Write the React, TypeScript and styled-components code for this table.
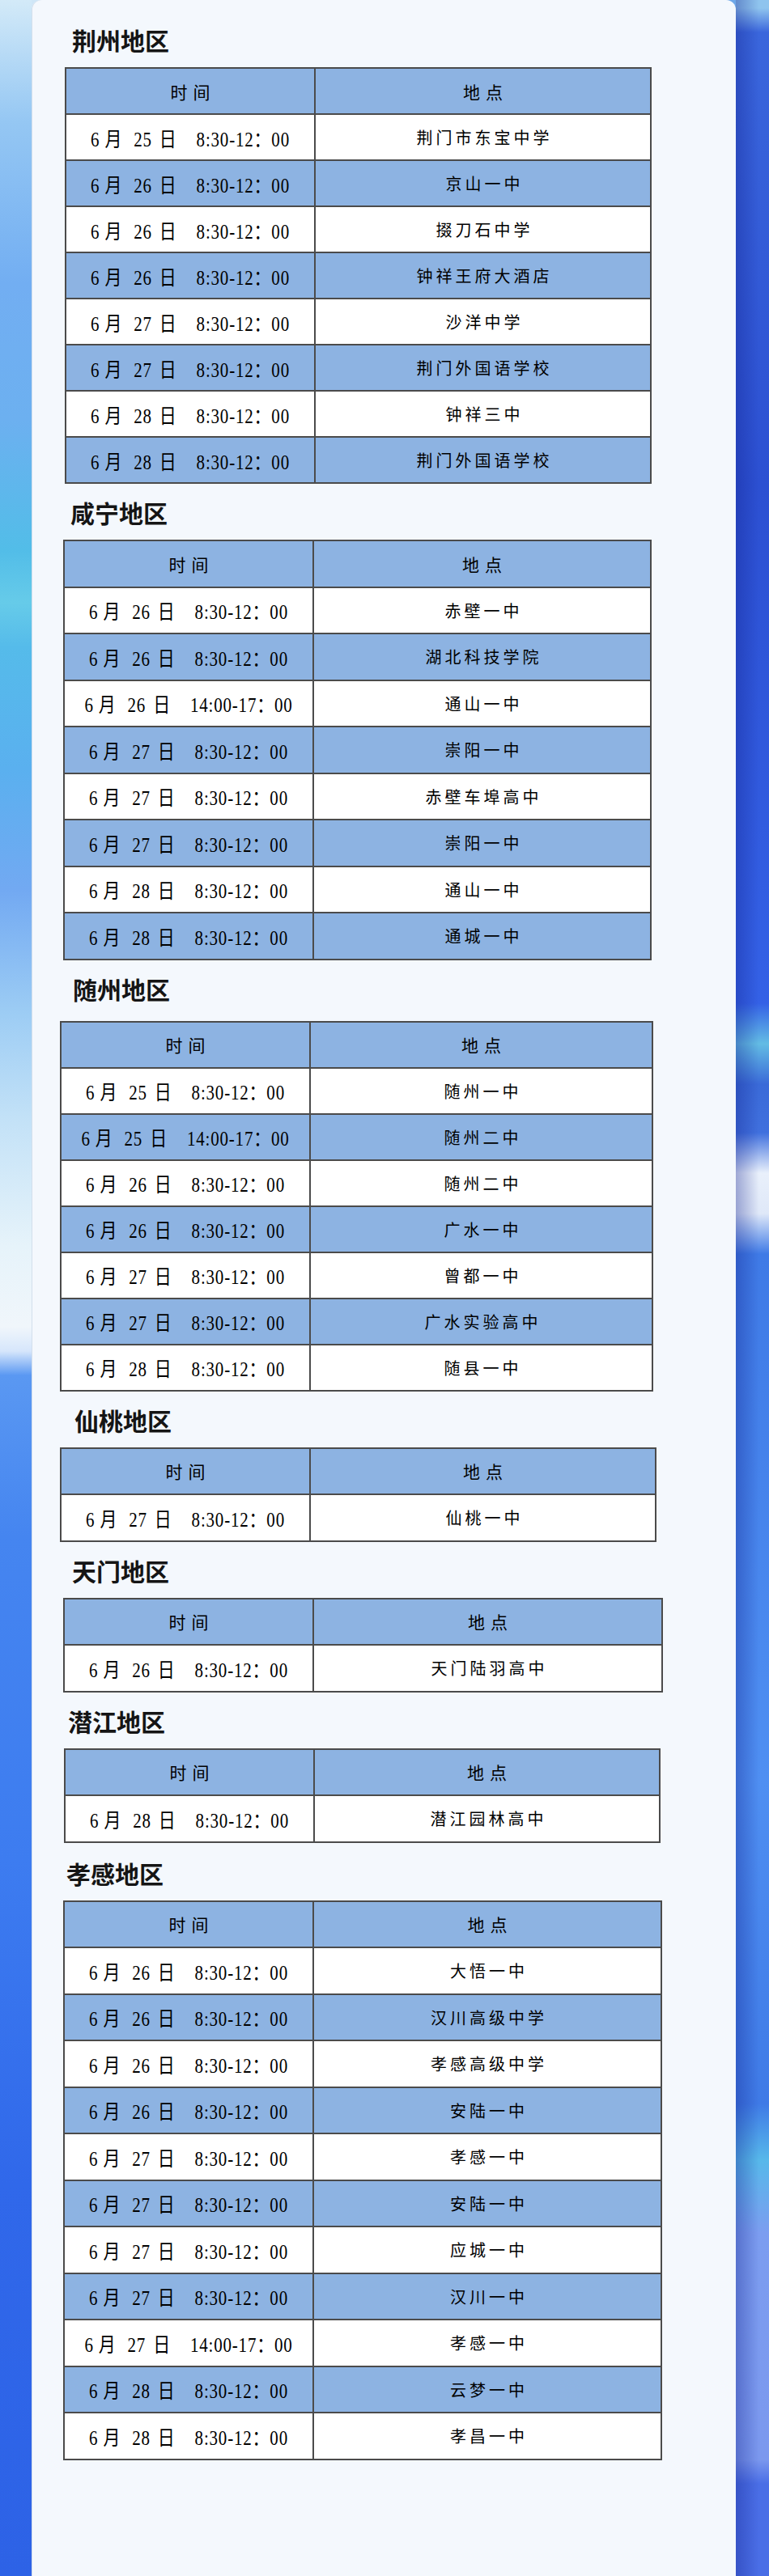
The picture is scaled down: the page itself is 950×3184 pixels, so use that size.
import React from "react";
import styled, { createGlobalStyle } from "styled-components";

type Entry = [string, string, string, string];

interface Region {
  name: string;
  titleX: number;
  titleTop: number;
  titleBottom: number;
  tableX: number;
  tableW: number;
  rowH: number;
  rows: Entry[];
}

const AM = "8:30-12：00";
const PM = "14:00-17：00";

const regions: Region[] = [
  {
    name: "荆州地区",
    titleX: 50,
    titleTop: 15,
    titleBottom: 14,
    tableX: 41,
    tableW: 725,
    rowH: 57,
    rows: [
      ["6", "25", AM, "荆门市东宝中学"],
      ["6", "26", AM, "京山一中"],
      ["6", "26", AM, "掇刀石中学"],
      ["6", "26", AM, "钟祥王府大酒店"],
      ["6", "27", AM, "沙洋中学"],
      ["6", "27", AM, "荆门外国语学校"],
      ["6", "28", AM, "钟祥三中"],
      ["6", "28", AM, "荆门外国语学校"],
    ],
  },
  {
    name: "咸宁地区",
    titleX: 48,
    titleTop: 15,
    titleBottom: 14,
    tableX: 39,
    tableW: 727,
    rowH: 57.5,
    rows: [
      ["6", "26", AM, "赤壁一中"],
      ["6", "26", AM, "湖北科技学院"],
      ["6", "26", PM, "通山一中"],
      ["6", "27", AM, "崇阳一中"],
      ["6", "27", AM, "赤壁车埠高中"],
      ["6", "27", AM, "崇阳一中"],
      ["6", "28", AM, "通山一中"],
      ["6", "28", AM, "通城一中"],
    ],
  },
  {
    name: "随州地区",
    titleX: 51,
    titleTop: 15,
    titleBottom: 20,
    tableX: 35,
    tableW: 733,
    rowH: 57,
    rows: [
      ["6", "25", AM, "随州一中"],
      ["6", "25", PM, "随州二中"],
      ["6", "26", AM, "随州二中"],
      ["6", "26", AM, "广水一中"],
      ["6", "27", AM, "曾都一中"],
      ["6", "27", AM, "广水实验高中"],
      ["6", "28", AM, "随县一中"],
    ],
  },
  {
    name: "仙桃地区",
    titleX: 53,
    titleTop: 15,
    titleBottom: 14,
    tableX: 35,
    tableW: 737,
    rowH: 57.5,
    rows: [["6", "27", AM, "仙桃一中"]],
  },
  {
    name: "天门地区",
    titleX: 50,
    titleTop: 15,
    titleBottom: 14,
    tableX: 39,
    tableW: 741,
    rowH: 57.5,
    rows: [["6", "26", AM, "天门陆羽高中"]],
  },
  {
    name: "潜江地区",
    titleX: 45,
    titleTop: 15,
    titleBottom: 14,
    tableX: 40,
    tableW: 737,
    rowH: 57.5,
    rows: [["6", "28", AM, "潜江园林高中"]],
  },
  {
    name: "孝感地区",
    titleX: 43,
    titleTop: 17,
    titleBottom: 14,
    tableX: 39,
    tableW: 740,
    rowH: 57.5,
    rows: [
      ["6", "26", AM, "大悟一中"],
      ["6", "26", AM, "汉川高级中学"],
      ["6", "26", AM, "孝感高级中学"],
      ["6", "26", AM, "安陆一中"],
      ["6", "27", AM, "孝感一中"],
      ["6", "27", AM, "安陆一中"],
      ["6", "27", AM, "应城一中"],
      ["6", "27", AM, "汉川一中"],
      ["6", "27", PM, "孝感一中"],
      ["6", "28", AM, "云梦一中"],
      ["6", "28", AM, "孝昌一中"],
    ],
  },
];

const GlobalStyle = createGlobalStyle`
  html, body {
    margin: 0;
    padding: 0;
  }
  body {
    background: #2d62e6;
    font-family: "Noto Sans CJK SC", sans-serif;
  }
`;

const Page = styled.div`
  display: flex;
  width: 950px;
  min-height: 3184px;
  background: linear-gradient(to right, #cfe6f7 0, #cfe6f7 50%, #6fa8e8 50%);
`;

const LeftRail = styled.div`
  width: 39px;
  flex: none;
  background: linear-gradient(
    to bottom,
    #d3eaf8 0,
    #95c7f3 150px,
    #72aef2 350px,
    #6cb0f0 520px,
    #52bde8 680px,
    #66cbe9 745px,
    #55bbea 800px,
    #5ab0ef 950px,
    #72a9f2 1100px,
    #9cccf4 1250px,
    #c2e1f7 1380px,
    #e6f3fa 1540px,
    #f0f6fb 1640px,
    #d6e6fb 1670px,
    #5a98f2 1700px,
    #4585f0 1900px,
    #3d7cf0 2300px,
    #3068ea 2700px,
    #2d62e6 3184px
  );
`;

const RightRail = styled.div`
  flex: 1;
  background:
    linear-gradient(to right, rgba(18, 32, 140, 0.35), rgba(18, 32, 140, 0) 70%),
    linear-gradient(
      to bottom,
      #8fc4ee 0,
      #8fc4ee 10px,
      #3a66dc 40px,
      #2c50d2 600px,
      #3461e6 1240px,
      #63bce4 1290px,
      #3a6ad8 1340px,
      #4070de 1400px,
      #e9f0fb 1450px,
      #dfe8f8 1500px,
      #3f7ae6 1550px,
      #4f8ff2 2200px,
      #3f7ae6 2600px,
      #57b8ea 2670px,
      #7c9df0 2760px,
      #7b98ee 3040px,
      #4a6ee6 3070px,
      #4a6ee6 3184px
    );
`;

const Card = styled.main`
  width: 870px;
  flex: none;
  box-sizing: border-box;
  padding-top: 14px;
  background: #f4f8fd;
  border-radius: 12px 12px 0 0;
  box-shadow: inset 1px 0 0 #d3dfec;
`;

const Section = styled.section`
  display: flow-root;
`;

const Title = styled.h2<{ $x: number; $top: number; $bottom: number }>`
  margin: ${(p) => p.$top}px 0 ${(p) => p.$bottom}px ${(p) => p.$x}px;
  font-family: "Noto Sans CJK SC", sans-serif;
  font-size: 30px;
  font-weight: 700;
  line-height: 40px;
  color: #151515;
`;

const Table = styled.div<{ $x: number; $w: number }>`
  margin-left: ${(p) => p.$x}px;
  width: ${(p) => p.$w}px;
  box-sizing: border-box;
  border: 2px solid #4b4b4b;
`;

type Tone = "head" | "blue" | "white";

const Row = styled.div<{ $tone: Tone; $h: number }>`
  display: grid;
  grid-template-columns: 308px 1fr;
  box-sizing: border-box;
  height: ${(p) => p.$h}px;
  border-top: 2px solid #4b4b4b;
  background: ${(p) => (p.$tone === "white" ? "#ffffff" : "#8db3e2")};
  &:first-child {
    border-top: none;
    height: ${(p) => p.$h - 2}px;
  }
`;

const Cell = styled.div<{ $divider?: boolean }>`
  display: flex;
  align-items: center;
  justify-content: center;
  box-sizing: border-box;
  border-right: ${(p) => (p.$divider ? "2px solid #4b4b4b" : "none")};
  color: #000;
`;

const HeadText = styled.span`
  font-family: "Noto Sans CJK SC", sans-serif;
  font-size: 21px;
  letter-spacing: 7px;
  padding-left: 7px;
`;

const PlaceText = styled.span`
  font-family: "Noto Sans CJK SC", sans-serif;
  font-size: 20px;
  letter-spacing: 4px;
  padding-left: 4px;
`;

const TimeText = styled.span`
  display: inline-flex;
  align-items: baseline;
  font-family: "Liberation Serif", "Noto Sans CJK SC", serif;
  font-size: 21px;
  letter-spacing: 0.8px;
  white-space: nowrap;
  transform: scaleY(1.2);
`;

const Unit = styled.span<{ $before: number; $after: number }>`
  font-family: "Noto Sans CJK SC", sans-serif;
  margin: 0 ${(p) => p.$after}px 0 ${(p) => p.$before}px;
`;

const ScheduleTable = ({ region }: { region: Region }) => (
  <Table $x={region.tableX} $w={region.tableW}>
    <Row $tone="head" $h={region.rowH}>
      <Cell $divider>
        <HeadText>时间</HeadText>
      </Cell>
      <Cell>
        <HeadText>地点</HeadText>
      </Cell>
    </Row>
    {region.rows.map(([month, day, clock, place], i) => (
      <Row key={i} $tone={i % 2 === 0 ? "white" : "blue"} $h={region.rowH}>
        <Cell $divider>
          <TimeText>
            <span>{month}</span>
            <Unit $before={6} $after={14}>
              月
            </Unit>
            <span>{day}</span>
            <Unit $before={9} $after={24}>
              日
            </Unit>
            <span>{clock}</span>
          </TimeText>
        </Cell>
        <Cell>
          <PlaceText>{place}</PlaceText>
        </Cell>
      </Row>
    ))}
  </Table>
);

export default function App() {
  return (
    <>
      <GlobalStyle />
      <Page>
        <LeftRail />
        <Card>
          {regions.map((r) => (
            <Section key={r.name}>
              <Title $x={r.titleX} $top={r.titleTop} $bottom={r.titleBottom}>
                {r.name}
              </Title>
              <ScheduleTable region={r} />
            </Section>
          ))}
        </Card>
        <RightRail />
      </Page>
    </>
  );
}
